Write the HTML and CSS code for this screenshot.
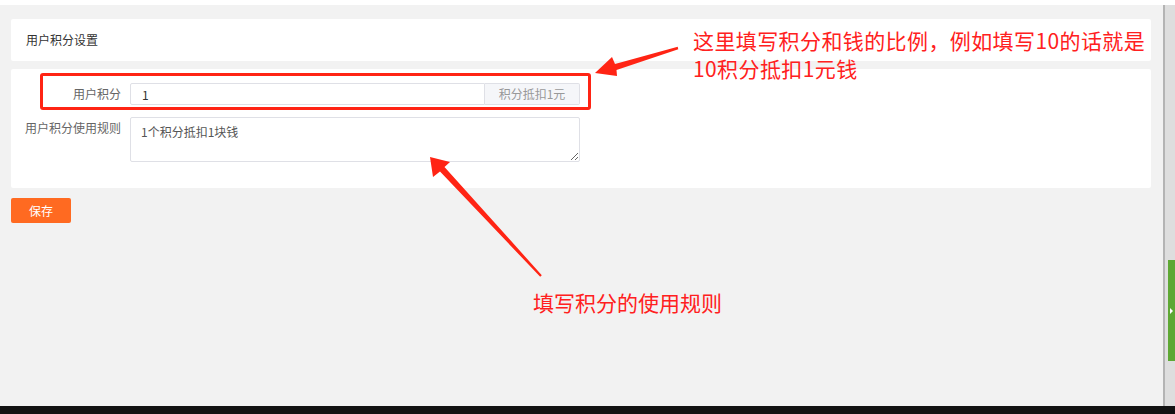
FILE: index.html
```html
<!DOCTYPE html>
<html lang="zh-CN">
<head>
  <meta charset="UTF-8" />
  <title>用户积分设置</title>
  <link rel="stylesheet" href="styles.css">
</head>
<body>
  <div class="topbar"></div>
  <div class="frame">
    <main class="content">
      <div class="panel panel-head">用户积分设置</div>
      <div class="panel panel-form">
        <div class="form-row">
          <label class="form-label" for="score">用户积分</label>
          <div class="input-group">
            <input type="text" id="score" value="1" />
            <span class="addon">积分抵扣1元</span>
          </div>
        </div>
        <div class="form-row">
          <label class="form-label" for="rule">用户积分使用规则</label>
          <textarea id="rule">1个积分抵扣1块钱</textarea>
        </div>
      </div>
      <div class="actions">
        <button type="button" class="btn-save">保存</button>
      </div>
    </main>
    <div class="scrollbar">
      <div class="scroll-tab"><span class="tab-arrow"></span></div>
    </div>
  </div>
  <div class="bottombar"></div>

  <!-- screenshot annotations -->
  <div class="mark-box"></div>
  <div class="note note-ratio">
    <div>这里填写积分和钱的比例，例如填写10的话就是</div>
    <div>10积分抵扣1元钱</div>
  </div>
  <div class="note note-rule">填写积分的使用规则</div>
  <svg class="arrows" width="1175" height="414" viewBox="0 0 1175 414">
    <polygon points="595,73 617,76 616.5,70 678.3,49.2 677.7,46.8 615,64 612,57" fill="#ff2414"/>
    <polygon points="430,157 433,177 440,171.5 540.2,276.8 541.8,275.2 444.5,167 450,162" fill="#ff2414"/>
  </svg>
</body>
</html>
```

FILE: styles.css
```css
html, body {
  margin: 0;
  padding: 0;
  height: 100%;
}
body {
  position: relative;
  display: flex;
  flex-direction: column;
  background-color: #f2f2f2;
  font-family: "Noto Sans CJK SC", "Noto Sans", sans-serif;
  font-size: 12px;
  color: #333;
  overflow: hidden;
}
.topbar {
  height: 5px;
  background-color: #fff;
}
.frame {
  flex: 1;
  display: flex;
}
.content {
  flex: 1;
  padding: 14px 12px 0 11px;
}
.panel {
  background-color: #fff;
  border-radius: 2px;
}
.panel-head {
  height: 42px;
  line-height: 42px;
  padding-left: 15px;
  color: #333;
}
.panel-form {
  margin-top: 8px;
  padding: 14px 0 26px;
  display: flex;
  flex-direction: column;
  gap: 12px;
}
.form-row {
  display: flex;
  align-items: flex-start;
}
.form-label {
  width: 110px;
  margin-right: 9px;
  text-align: right;
  line-height: 22px;
  color: #666;
}
.input-group {
  display: flex;
  height: 22px;
}
.input-group input {
  box-sizing: border-box;
  width: 355px;
  height: 22px;
  margin: 0;
  padding: 0 11px;
  border: 1px solid #dfe0e6;
  border-radius: 2px 0 0 2px;
  font-family: inherit;
  font-size: 12px;
  color: #333;
  outline: none;
}
.addon {
  box-sizing: border-box;
  width: 95px;
  height: 22px;
  line-height: 20px;
  border: 1px solid #dfe0e6;
  border-left: none;
  border-radius: 0 2px 2px 0;
  background-color: #f5f6f9;
  color: #999;
  text-align: center;
}
textarea {
  display: block;
  box-sizing: border-box;
  width: 450px;
  height: 45px;
  margin: 0;
  padding: 5px 10px;
  border: 1px solid #dfe0e6;
  border-radius: 2px;
  font-family: inherit;
  font-size: 12px;
  color: #555;
  outline: none;
}
.actions {
  display: flex;
  margin-top: 10px;
}
.btn-save {
  width: 60px;
  height: 25px;
  padding: 0;
  border: none;
  border-radius: 2px;
  background-color: #ff6a21;
  color: #fff;
  font-family: inherit;
  font-size: 12px;
  cursor: pointer;
}
.scrollbar {
  width: 10px;
  border-left: 2px solid #b4b4b4;
  background-color: #dedede;
  display: flex;
  justify-content: flex-end;
  padding-top: 255px;
}
.scroll-tab {
  width: 7px;
  height: 101px;
  background-color: #5ea834;
  display: flex;
  align-items: center;
}
.tab-arrow {
  margin-left: 2px;
  width: 0;
  height: 0;
  border-top: 3px solid transparent;
  border-bottom: 3px solid transparent;
  border-left: 3px solid #fff;
}
.bottombar {
  height: 8px;
  background-color: #121212;
}

/* annotations drawn over the page */
.mark-box {
  position: absolute;
  left: 40px;
  top: 73px;
  width: 545px;
  height: 31px;
  border: 3px solid #ff2414;
  border-radius: 3px;
}
.note {
  position: absolute;
  color: #ff2020;
  font-size: 21px;
  line-height: 28px;
  white-space: nowrap;
}
.note-ratio {
  left: 693px;
  top: 26px;
  letter-spacing: 0.4px;
}
.note-rule {
  left: 533px;
  top: 288px;
}
.arrows {
  position: absolute;
  left: 0;
  top: 0;
  pointer-events: none;
}
```
